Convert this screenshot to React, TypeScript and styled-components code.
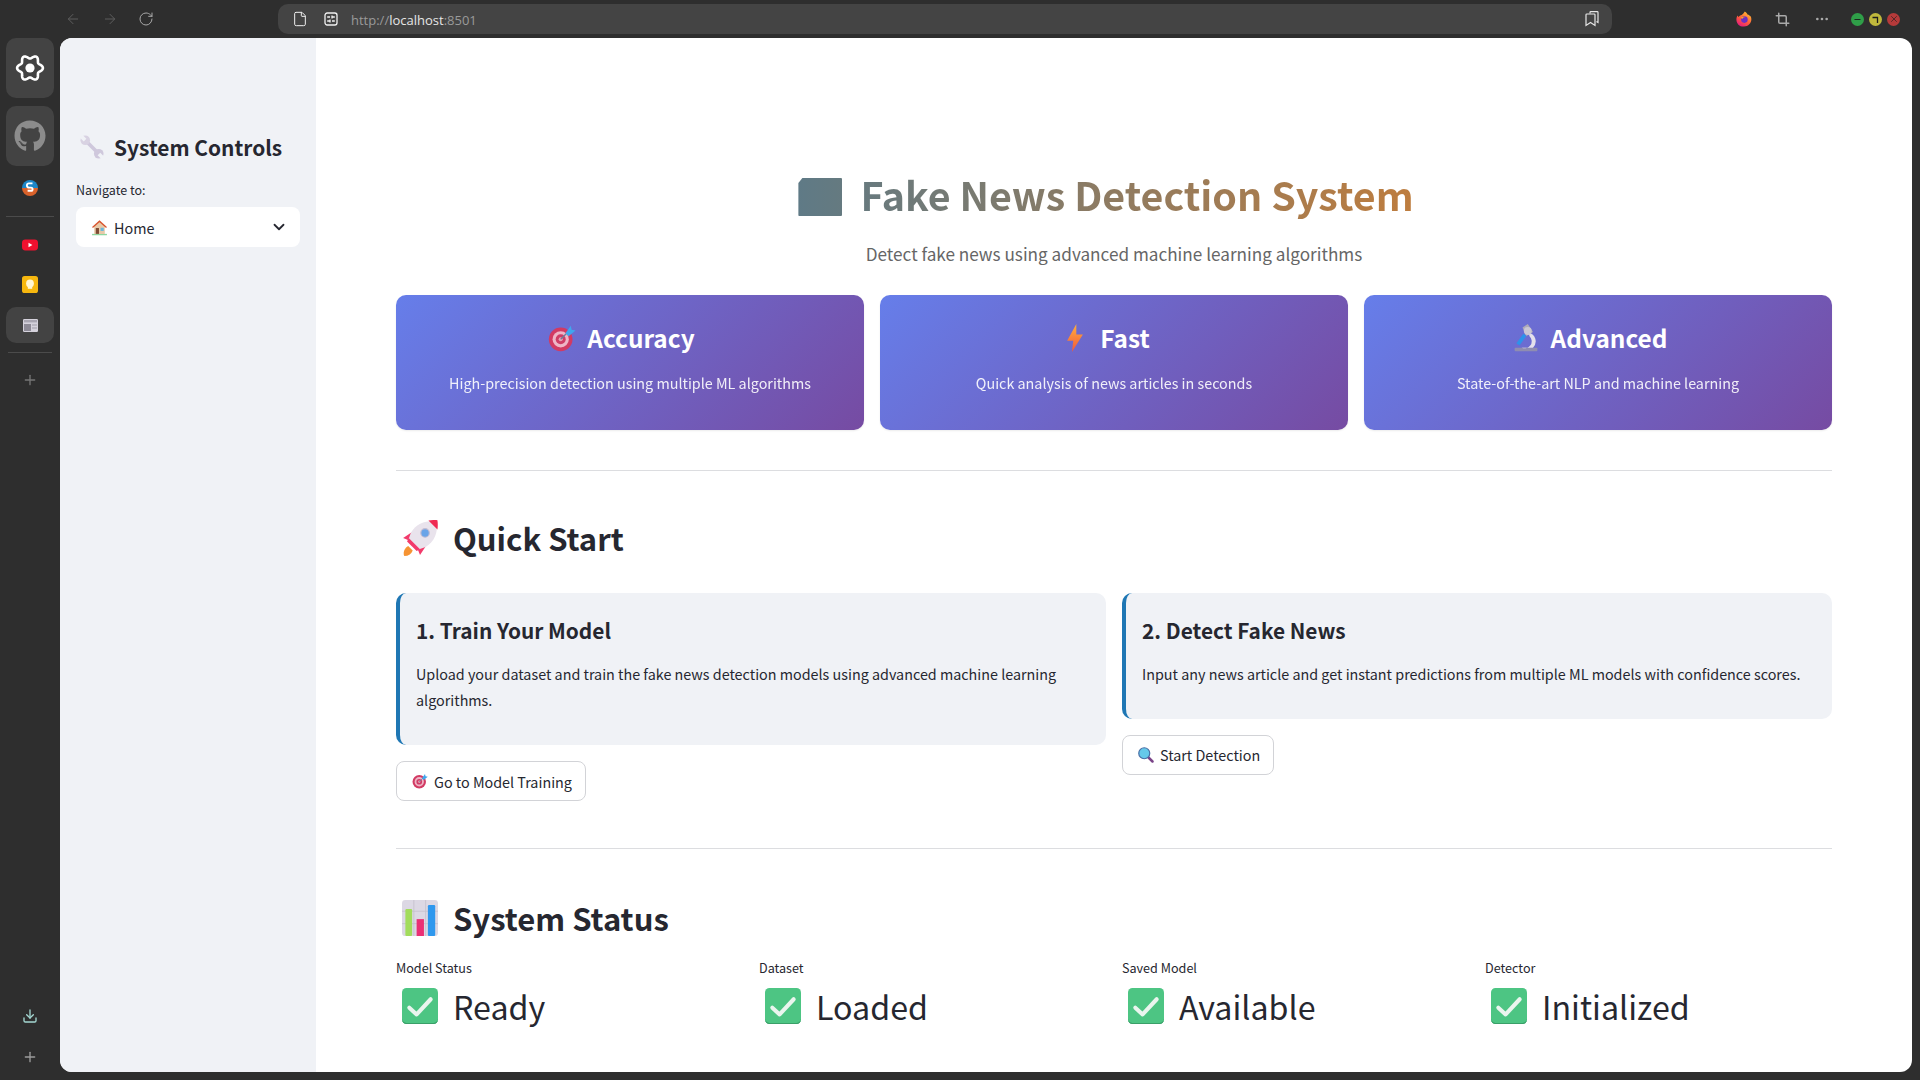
import { ReactNode } from 'react';
import { FaGithub } from 'react-icons/fa';
import {
  ArrowLeft,
  ArrowRight,
  ChevronDown,
  Crop,
  Download,
  File,
  Minus,
  MoreHorizontal,
  Plus,
  RotateCw,
  X,
} from 'lucide-react';
import styled, { createGlobalStyle } from 'styled-components';

const GlobalStyle = createGlobalStyle`
  html, body {
    margin: 0;
    padding: 0;
    height: 100%;
    background: #2e2e2e;
    overflow: hidden;
  }
  * {
    box-sizing: border-box;
  }
  body {
    font-family: "Noto Sans CJK SC", "Noto Sans", sans-serif;
    color: #262730;
  }
`;

const Shell = styled.div`
  width: 1920px;
  height: 1080px;
  display: flex;
  flex-direction: column;
  background: #2e2e2e;
`;

const TopBar = styled.div`
  height: 38px;
  flex-shrink: 0;
  display: flex;
  align-items: center;
`;

const NavButtons = styled.div`
  width: 278px;
  flex-shrink: 0;
  display: flex;
  align-items: center;
  gap: 20.5px;
  padding-left: 65px;
`;

const NavIcon = styled.span<{ $dim?: boolean }>`
  display: flex;
  width: 16px;
  height: 16px;
  color: ${({ $dim }) => ($dim ? '#5d5d5d' : '#a8a8a8')};
`;

const AddressBar = styled.div`
  width: 1334px;
  height: 30px;
  border-radius: 10px;
  background: #444444;
  display: flex;
  align-items: center;
  padding: 0 12px 0 14px;
  color: #f0f0f0;
`;

const AddressIcons = styled.div`
  display: flex;
  align-items: center;
  gap: 16px;
  margin-right: 13px;
`;

const Url = styled.div`
  flex: 1;
  font-family: "Open Sans", sans-serif;
  font-size: 13px;
  line-height: 18px;
  padding-top: 1px;
  color: #9a9a9a;
  b {
    font-weight: 400;
    color: #e6e6e6;
  }
`;

const ToolIcons = styled.div`
  flex: 1;
  display: flex;
  align-items: center;
  justify-content: flex-end;
  padding-right: 20px;
`;

const ToolIcon = styled.span<{ $width: number }>`
  display: flex;
  justify-content: center;
  width: ${({ $width }) => $width}px;
  color: #a9a9a9;
`;

const TrafficLights = styled.div`
  display: flex;
  gap: 5px;
  margin-left: 8px;
`;

const TrafficLight = styled.span<{ $color: string }>`
  width: 13px;
  height: 13px;
  border-radius: 50%;
  background: ${({ $color }) => $color};
  display: flex;
  align-items: center;
  justify-content: center;
  color: #1d1d1d;
`;

const Body = styled.div`
  flex: 1;
  display: flex;
  min-height: 0;
`;

const Rail = styled.div`
  width: 60px;
  flex-shrink: 0;
  display: flex;
  flex-direction: column;
  align-items: center;
  padding-bottom: 3px;
`;

const RailTile = styled.div<{ $height: number; $gapTop?: number; $gapBottom?: number }>`
  width: 48px;
  height: ${({ $height }) => $height}px;
  border-radius: 10px;
  background: #434343;
  display: flex;
  align-items: center;
  justify-content: center;
  margin-top: ${({ $gapTop }) => $gapTop ?? 0}px;
  margin-bottom: ${({ $gapBottom }) => $gapBottom ?? 8}px;
`;

const RailApp = styled.div<{ $height: number; $gapTop?: number }>`
  height: ${({ $height }) => $height}px;
  margin-top: ${({ $gapTop }) => $gapTop ?? 0}px;
  display: flex;
  align-items: center;
  justify-content: center;
`;

const RailRule = styled.div<{ $inset?: boolean }>`
  width: ${({ $inset }) => ($inset ? 44 : 48)}px;
  height: 1px;
  background: #4b4b4b;
  margin: ${({ $inset }) => ($inset ? '9px 0 6px' : '14px 0 12px')};
`;

const RailSpacer = styled.div`
  flex: 1;
`;

const RailAction = styled.div<{ $color: string }>`
  height: 41px;
  display: flex;
  align-items: center;
  justify-content: center;
  color: ${({ $color }) => $color};
`;

const Panel = styled.div`
  flex: 1;
  display: flex;
  margin: 0 8px 8px 0;
  border-radius: 12px;
  overflow: hidden;
  background: #ffffff;
`;

const Sidebar = styled.aside`
  width: 256px;
  flex-shrink: 0;
  background: #f0f2f6;
  padding: 90px 16px 0;
`;

const SidebarTitle = styled.h2`
  margin: 0 0 14px;
  font-size: 20.9px;
  line-height: 38px;
  font-weight: 600;
  display: flex;
  align-items: center;
  gap: 10px;
  padding-left: 4px;
`;

const FieldLabel = styled.div`
  font-size: 12.5px;
  line-height: 20px;
  margin-bottom: 7px;
`;

const Select = styled.div`
  height: 40px;
  border-radius: 8px;
  background: #ffffff;
  display: flex;
  align-items: center;
  padding: 0 12px 0 15px;
  font-size: 14.35px;
  gap: 6px;
`;

const SelectValue = styled.span`
  flex: 1;
`;

const Main = styled.main`
  flex: 1;
  min-width: 0;
  padding: 0 80px;
`;

const Title = styled.h1`
  margin: 126px 0 0;
  padding-right: 16px;
  font-size: 39.4px;
  line-height: 60px;
  font-weight: 700;
  text-align: center;
  background: linear-gradient(90deg, #1f77b4, #ff7f0e);
  -webkit-background-clip: text;
  background-clip: text;
  color: transparent;
`;

const TitleGlyph = styled.span`
  display: inline-block;
  width: 44px;
  height: 38px;
  margin-right: 18px;
  vertical-align: -5px;
  background: linear-gradient(90deg, #5f7a86, #657a80);
  clip-path: polygon(4px 0, 100% 0, 100% 100%, 0 100%, 0 5px);
  border-radius: 1px;
`;

const Subtitle = styled.p`
  margin: 16px 0 0;
  font-size: 17.17px;
  line-height: 28px;
  text-align: center;
  color: #666666;
`;

const FeatureGrid = styled.div`
  display: grid;
  grid-template-columns: repeat(3, 1fr);
  gap: 16px;
  margin-top: 26.5px;
`;

const FeatureCard = styled.div`
  height: 135px;
  border-radius: 10px;
  background: linear-gradient(135deg, #667eea 0%, #764ba2 100%);
  box-shadow: 0 1px 2px rgba(0, 0, 0, 0.08);
  color: #ffffff;
  padding-top: 24px;
  text-align: center;
`;

const FeatureTitle = styled.h3`
  margin: 0;
  padding-right: 17px;
  font-size: 24.4px;
  line-height: 38px;
  font-weight: 600;
  display: flex;
  align-items: center;
  justify-content: center;
  gap: 11px;
`;

const FeatureText = styled.p`
  margin: 13px 0 0;
  font-size: 14.35px;
  line-height: 26px;
  opacity: 0.9;
`;

const Rule = styled.hr<{ $top: number }>`
  border: none;
  height: 1px;
  background: #dcdde0;
  margin: ${({ $top }) => $top}px 0 0;
`;

const SectionTitle = styled.h2<{ $top: number }>`
  margin: ${({ $top }) => $top}px 0 0;
  font-size: 31px;
  line-height: 52px;
  font-weight: 600;
  display: flex;
  align-items: center;
  gap: 15px;
  padding-left: 6px;
`;

const StepGrid = styled.div`
  display: grid;
  grid-template-columns: repeat(2, 1fr);
  gap: 16px;
  align-items: start;
  margin-top: 29px;
`;

const StepBox = styled.div`
  background: #f0f2f6;
  border-left: 4px solid #1f77b4;
  border-radius: 10px;
  padding: 19px 16px 32px;
`;

const StepTitle = styled.h3`
  margin: 0;
  font-size: 20.85px;
  line-height: 36px;
  font-weight: 600;
`;

const StepText = styled.p`
  margin: 13px 0 0;
  font-size: 14.35px;
  line-height: 26.4px;
`;

const ActionButton = styled.button`
  margin-top: 16px;
  height: 40px;
  padding: 0 13px 0 15px;
  border: 1px solid #d2d3d7;
  border-radius: 8px;
  background: #ffffff;
  color: #262730;
  font-family: inherit;
  font-size: 14.35px;
  display: inline-flex;
  align-items: center;
  gap: 6px;
`;

const StatusGrid = styled.div`
  display: grid;
  grid-template-columns: repeat(4, 1fr);
  gap: 16px;
  margin-top: 14px;
`;

const StatusLabel = styled.div`
  font-size: 12.6px;
  line-height: 20px;
`;

const StatusValue = styled.div`
  font-size: 32.2px;
  line-height: 52px;
  margin-top: 2px;
  display: flex;
  align-items: center;
  gap: 15px;
  padding-left: 6px;
`;

const Svg = ({
  size,
  children,
}: {
  size: number;
  children: ReactNode;
}) => (
  <svg
    width={size}
    height={size}
    viewBox="0 0 32 32"
    style={{ flexShrink: 0, display: 'block' }}
  >
    {children}
  </svg>
);

// lobed outline of the browser's settings icon
const lobedPath = (() => {
  const points: string[] = [];
  for (let i = 0; i < 120; i += 1) {
    const angle = (i / 120) * Math.PI * 2;
    const radius = 11.2 + 1.7 * Math.cos(6 * angle);
    points.push(
      `${(16 + radius * Math.cos(angle)).toFixed(2)} ${(16 + radius * Math.sin(angle)).toFixed(2)}`,
    );
  }
  return `M${points.join('L')}Z`;
})();

const GearIcon = () => (
  <svg width="32" height="32" viewBox="0 0 32 32">
    <path d={lobedPath} fill="none" stroke="#ffffff" strokeWidth="2.6" />
    <circle cx="16" cy="16" r="4.6" fill="#ffffff" />
  </svg>
);

const SiteIcon = () => (
  <svg width="16" height="16" viewBox="0 0 16 16">
    <path d="M0 8a8 8 0 0 1 16 0Z" fill="#1c86c8" />
    <path d="M0 8a8 8 0 0 0 16 0Z" fill="#d9622b" />
    <path
      d="M10.5 3.4H7a2 2 0 0 0 0 4.2h2a1.6 1.6 0 0 1 0 3.2H5.6"
      fill="none"
      stroke="#ffffff"
      strokeWidth="1.9"
    />
  </svg>
);

const YoutubeIcon = () => (
  <svg width="16" height="16" viewBox="0 0 16 16">
    <rect y="2.4" width="16" height="11" rx="3.4" fill="#f0112f" />
    <path d="M6.5 5.8 10.4 8l-3.9 2.2Z" fill="#ffffff" />
  </svg>
);

const KeepIcon = () => (
  <svg width="16" height="17" viewBox="0 0 16 17">
    <rect width="16" height="17" rx="2.6" fill="#f6b70f" />
    <circle cx="8" cy="7.4" r="3.9" fill="#fff6d4" />
    <rect x="5.8" y="11" width="4.4" height="1.8" fill="#fff6d4" />
  </svg>
);

const NewsIcon = () => (
  <svg width="15" height="13" viewBox="0 0 15 13">
    <rect width="15" height="13" rx="1.2" fill="#d5d2dc" />
    <rect x="1" y="1" width="13" height="2.4" fill="#a9a6b2" />
    <rect x="1" y="5" width="7" height="7" fill="#8d8a96" />
    <rect x="9" y="5.4" width="5" height="1.2" fill="#a9a6b2" />
    <rect x="9" y="8.4" width="5" height="1.2" fill="#a9a6b2" />
  </svg>
);

const FirefoxIcon = () => (
  <svg width="16" height="16" viewBox="0 0 16 16">
    <defs>
      <linearGradient id="fx" x1="0.8" y1="0" x2="0.2" y2="1">
        <stop offset="0" stopColor="#ffc531" />
        <stop offset="0.55" stopColor="#ff5a3a" />
        <stop offset="1" stopColor="#e31587" />
      </linearGradient>
    </defs>
    <path
      d="M8.8.4c1.6 1.2 2.3 2 2.7 3 1.4.4 2.6 1.2 3.4 2.4 1.7 4.6-1.6 9.6-6.9 9.8C3.6 15.8.4 12.6.4 8.4c0-1.600.5-3 1.300-4 .2.7.5 1.200 1 1.500.6-1 1.600-1.700 3-1.900C6.900 3 7.900 1.800 8.800.4Z"
      fill="url(#fx)"
    />
    <circle cx="8.4" cy="8.6" r="3.3" fill="#6a2ec2" />
    <path d="M4.6 6.8c1.2-1.2 3-1.5 4.800-.8-1.600 0-2.800.7-3 2Z" fill="#ffa21f" />
  </svg>
);

const RestoreGlyph = () => (
  <svg width="9" height="9" viewBox="0 0 9 9">
    <path d="M1.5 2.5H6.5V8" fill="none" stroke="#1d1d1d" strokeWidth="1.3" />
  </svg>
);

const ReadingIcon = () => (
  <svg width="16" height="16" viewBox="0 0 16 16" fill="none" stroke="#e6e6e6" strokeWidth="1.2">
    <path d="M6 2.5V1.500a.8.8 0 0 1 .8-.8h6.400a.8.8 0 0 1 .8.800v10l-1.500-1" />
    <path d="M2.8 3h7.400a.8.800 0 0 1 .8.800v10.700L6.500 11.500 2 14.500V3.800a.8.800 0 0 1 .8-.8Z" />
  </svg>
);

const TabsIcon = () => (
  <svg width="14" height="14" viewBox="0 0 14 14" fill="none" stroke="#f0f0f0" strokeWidth="1.3">
    <rect x="1" y="1" width="12" height="12" rx="2.2" />
    <path d="M3.2 5H6M8 3.600V6.400M8 5h2.800M3.2 9H6M6 7.600v2.800M8 9h2.800" />
  </svg>
);

const WrenchEmoji = ({ size }: { size: number }) => (
  <Svg size={size}>
    <path d="M7 7 25 25" stroke="#cfc8dc" strokeWidth="5" />
    <circle cx="7" cy="7" r="6.4" fill="#d8d2e2" />
    <circle cx="25" cy="25" r="6.4" fill="#cfc8dc" />
    <path d="M3.500 0 8.500 5 5 8.500 0 3.500Z" fill="#f0f2f6" />
    <path d="M28.500 32 23.500 27 27 23.500 32 28.500Z" fill="#f0f2f6" />
  </Svg>
);

const HouseEmoji = ({ size }: { size: number }) => (
  <Svg size={size}>
    <rect x="2" y="28" width="28" height="2.6" fill="#8fd6a0" />
    <path d="M6 13 16 4l10 9v15H6Z" fill="#e8c9a8" />
    <path d="M2 15 16 2.500 30 15l-1.600 1.800L16 6 3.600 16.800Z" fill="#d9552f" />
    <rect x="9" y="17" width="6" height="11" fill="#7c4a33" />
    <rect x="18" y="16.5" width="6" height="6" fill="#69b7dc" />
  </Svg>
);

const TargetEmoji = ({ size }: { size: number }) => (
  <Svg size={size}>
    <circle cx="14.5" cy="17.5" r="13.5" fill="#d23a63" />
    <circle cx="14.5" cy="17.5" r="9.3" fill="#eeb5c6" />
    <circle cx="14.5" cy="17.5" r="5.7" fill="#cf3d66" />
    <circle cx="14.5" cy="17.5" r="2.3" fill="#e7a2b6" />
    <path d="M14.5 17.5 26 6" stroke="#6a7f9c" strokeWidth="1.5" />
    <path d="M20 10.500 26 2l1 4.500 4.500 1-8 6.500Z" fill="#3fa6ee" />
  </Svg>
);

const BoltEmoji = ({ size }: { size: number }) => (
  <Svg size={size}>
    <defs>
      <linearGradient id="bolt" x1="0.5" y1="0" x2="0.5" y2="1">
        <stop offset="0" stopColor="#ffb13d" />
        <stop offset="1" stopColor="#f0563b" />
      </linearGradient>
    </defs>
    <path d="M17.5 0 7 19h7l-1.500 13L25 12h-7.500Z" fill="url(#bolt)" />
  </Svg>
);

const MicroscopeEmoji = ({ size }: { size: number }) => (
  <Svg size={size}>
    <rect x="3" y="27" width="26" height="4" rx="1" fill="#8f8db0" />
    <path d="M19 10a10 10 0 0 1 5 17H11a8 8 0 0 0 9-13Z" fill="#e4e1ec" />
    <path d="M12 4 18 0l6 9-8 5Z" fill="#aeaab8" />
    <path d="M13 11 5 22l3.500 2.500 8-11Z" fill="#2e92ea" />
    <circle cx="18" cy="8" r="4.5" fill="#cbc7d4" />
  </Svg>
);

const RocketEmoji = ({ size }: { size: number }) => (
  <Svg size={size}>
    <path d="M2 32c-1.500-3.500.5-7.500 3.500-9l4 4c-1 3-3.500 4.800-7.500 5Z" fill="#f69433" />
    <path d="M10 10 1 16l7.500 3Z" fill="#f23a6b" />
    <path d="M22 22 16 31 13 23.500Z" fill="#f23a6b" />
    <path d="M31 1C21 0 13 3 8 11L5.500 18 14 26.500 21 24C29 19 32 11 31 1Z" fill="#e9e3ec" />
    <path d="M31.500 8.500 23.500 .500c2.500-.5 5.500-.7 8-.3.4 2.500.4 5.800 0 8.300Z" fill="#ef2a52" />
    <path d="M6 16l10 10-3 1.500-8.500-8.500Z" fill="#f23a6b" />
    <circle cx="20.5" cy="11.5" r="3.8" fill="#6aa4e8" stroke="#c4bdd2" strokeWidth="1" />
  </Svg>
);

const ChartEmoji = ({ size }: { size: number }) => (
  <Svg size={size}>
    <rect width="32" height="32" rx="3" fill="#dcd8e4" />
    <path d="M0 10h32M0 21h32M10.500 0v32M21 0v32" stroke="#c4c0cc" strokeWidth="0.7" />
    <rect x="3" y="8" width="6" height="24" rx="1" fill="#a2dc5c" />
    <rect x="13" y="17" width="6.5" height="15" fill="#ea2f75" />
    <rect x="23" y="4.5" width="6.5" height="27.5" rx="1" fill="#2f98ee" />
  </Svg>
);

const SearchEmoji = ({ size }: { size: number }) => (
  <Svg size={size}>
    <path d="M19 19 29 29" stroke="#7a4488" strokeWidth="5" strokeLinecap="round" />
    <circle cx="12.5" cy="12.5" r="11" fill="#65c9ea" stroke="#4a6fa6" strokeWidth="2.4" />
  </Svg>
);

const CheckEmoji = ({ size }: { size: number }) => (
  <Svg size={size}>
    <rect width="32" height="32" rx="4" fill="#4dc583" />
    <path d="M0 27v1a4 4 0 0 0 4 4h24a4 4 0 0 0 4-4v-1a4 4 0 0 1-4 4H4a4 4 0 0 1-4-4Z" fill="#3a9f68" />
    <path
      d="M6.5 17.5 13 23.5 25.5 10"
      fill="none"
      stroke="#eaf5ee"
      strokeWidth="3.6"
      strokeLinecap="round"
      strokeLinejoin="round"
    />
  </Svg>
);

const features = [
  {
    icon: <TargetEmoji size={28} />,
    title: 'Accuracy',
    text: 'High-precision detection using multiple ML algorithms',
  },
  {
    icon: <BoltEmoji size={28} />,
    title: 'Fast',
    text: 'Quick analysis of news articles in seconds',
  },
  {
    icon: <MicroscopeEmoji size={28} />,
    title: 'Advanced',
    text: 'State-of-the-art NLP and machine learning',
  },
];

const statuses = [
  { label: 'Model Status', value: 'Ready' },
  { label: 'Dataset', value: 'Loaded' },
  { label: 'Saved Model', value: 'Available' },
  { label: 'Detector', value: 'Initialized' },
];

export default function App() {
  return (
    <>
      <GlobalStyle />
      <Shell>
        <TopBar>
          <NavButtons>
            <NavIcon $dim>
              <ArrowLeft size={16} strokeWidth={1.5} />
            </NavIcon>
            <NavIcon $dim>
              <ArrowRight size={16} strokeWidth={1.5} />
            </NavIcon>
            <NavIcon>
              <RotateCw size={16} strokeWidth={1.5} />
            </NavIcon>
          </NavButtons>
          <AddressBar>
            <AddressIcons>
              <File size={16} strokeWidth={1.5} />
              <TabsIcon />
            </AddressIcons>
            <Url>
              http://<b>localhost</b>:8501
            </Url>
            <ReadingIcon />
          </AddressBar>
          <ToolIcons>
            <ToolIcon $width={38}>
              <FirefoxIcon />
            </ToolIcon>
            <ToolIcon $width={38}>
              <Crop size={15} strokeWidth={2.4} />
            </ToolIcon>
            <ToolIcon $width={42}>
              <MoreHorizontal size={16} />
            </ToolIcon>
            <TrafficLights>
              <TrafficLight $color="#2f9e48">
                <Minus size={9} strokeWidth={2.5} />
              </TrafficLight>
              <TrafficLight $color="#c0b83c">
                <RestoreGlyph />
              </TrafficLight>
              <TrafficLight $color="#b53a3a">
                <X size={10} strokeWidth={1.5} />
              </TrafficLight>
            </TrafficLights>
          </ToolIcons>
        </TopBar>
        <Body>
          <Rail>
            <RailTile $height={60}>
              <GearIcon />
            </RailTile>
            <RailTile $height={60}>
              <FaGithub size={32} color="#8c8c8c" />
            </RailTile>
            <RailApp $height={28}>
              <SiteIcon />
            </RailApp>
            <RailRule />
            <RailApp $height={32}>
              <YoutubeIcon />
            </RailApp>
            <RailApp $height={32} $gapTop={7}>
              <KeepIcon />
            </RailApp>
            <RailTile $height={36} $gapTop={7} $gapBottom={0}>
              <NewsIcon />
            </RailTile>
            <RailRule $inset />
            <RailAction $color="#767676">
              <Plus size={16} />
            </RailAction>
            <RailSpacer />
            <RailAction $color="#a4d8d2">
              <Download size={16} />
            </RailAction>
            <RailAction $color="#9c9c9c">
              <Plus size={16} />
            </RailAction>
          </Rail>
          <Panel>
            <Sidebar>
              <SidebarTitle>
                <WrenchEmoji size={24} />
                System Controls
              </SidebarTitle>
              <FieldLabel>Navigate to:</FieldLabel>
              <Select>
                <HouseEmoji size={17} />
                <SelectValue>Home</SelectValue>
                <ChevronDown size={18} strokeWidth={2.4} />
              </Select>
            </Sidebar>
            <Main>
              <Title>
                <TitleGlyph />
                Fake News Detection System
              </Title>
              <Subtitle>Detect fake news using advanced machine learning algorithms</Subtitle>
              <FeatureGrid>
                {features.map((feature) => (
                  <FeatureCard key={feature.title}>
                    <FeatureTitle>
                      {feature.icon}
                      {feature.title}
                    </FeatureTitle>
                    <FeatureText>{feature.text}</FeatureText>
                  </FeatureCard>
                ))}
              </FeatureGrid>
              <Rule $top={40} />
              <SectionTitle $top={41}>
                <RocketEmoji size={36} />
                Quick Start
              </SectionTitle>
              <StepGrid>
                <div>
                  <StepBox>
                    <StepTitle>1. Train Your Model</StepTitle>
                    <StepText>
                      Upload your dataset and train the fake news detection models using
                      advanced machine learning algorithms.
                    </StepText>
                  </StepBox>
                  <ActionButton>
                    <TargetEmoji size={16} />
                    Go to Model Training
                  </ActionButton>
                </div>
                <div>
                  <StepBox>
                    <StepTitle>2. Detect Fake News</StepTitle>
                    <StepText>
                      Input any news article and get instant predictions from multiple ML
                      models with confidence scores.
                    </StepText>
                  </StepBox>
                  <ActionButton>
                    <SearchEmoji size={16} />
                    Start Detection
                  </ActionButton>
                </div>
              </StepGrid>
              <Rule $top={47} />
              <SectionTitle $top={43}>
                <ChartEmoji size={36} />
                System Status
              </SectionTitle>
              <StatusGrid>
                {statuses.map((status) => (
                  <div key={status.label}>
                    <StatusLabel>{status.label}</StatusLabel>
                    <StatusValue>
                      <CheckEmoji size={36} />
                      {status.value}
                    </StatusValue>
                  </div>
                ))}
              </StatusGrid>
            </Main>
          </Panel>
        </Body>
      </Shell>
    </>
  );
}
